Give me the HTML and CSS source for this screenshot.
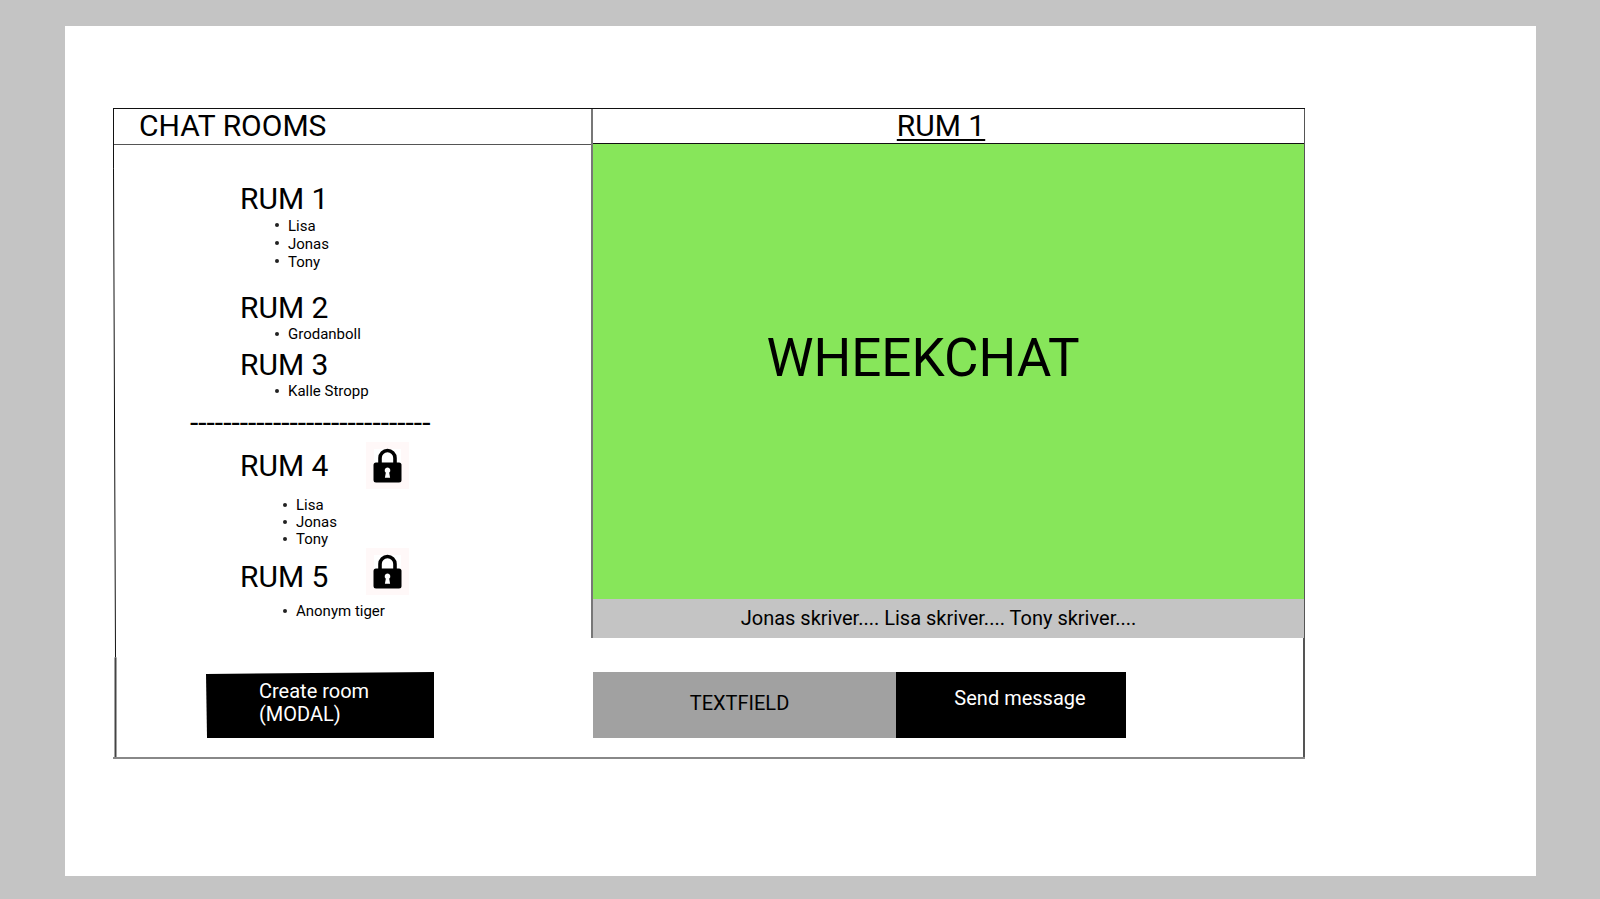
FILE: index.html
```html
<!DOCTYPE html>
<html lang="sv">
<head>
<meta charset="utf-8">
<title>Wheekchat</title>
<link rel="stylesheet" href="styles.css">
</head>
<body>
<svg class="sprite" aria-hidden="true">
  <symbol id="lock" viewBox="0 0 43 47">
    <rect width="43" height="47" fill="#fff8f8"/>
    <rect x="8" y="7" width="27" height="18" fill="#fff"/>
    <path d="M14 23V16a7.500 7.500 0 0 1 15 0v7" fill="none" stroke="#000" stroke-width="3.600"/>
    <rect x="7.500" y="20.500" width="28" height="20" rx="2.500" fill="#000"/>
    <path d="M21.500 25.500a2.900 2.900 0 0 1 1.700 5.200l.9 5.100h-5.200l.9-5.100a2.900 2.900 0 0 1 1.700-5.200z" fill="#fff"/>
  </symbol>
</svg>
<main class="page">
  <div class="frame">
    <aside class="sidebar">
      <h1 class="title">CHAT ROOMS</h1>
      <div class="rooms">
        <section class="room room-spaced">
          <h2 class="room-name">RUM 1</h2>
          <ul class="members"><li>Lisa</li><li>Jonas</li><li>Tony</li></ul>
        </section>
        <section class="room">
          <h2 class="room-name">RUM 2</h2>
          <ul class="members"><li>Grodanboll</li></ul>
        </section>
        <section class="room">
          <h2 class="room-name">RUM 3</h2>
          <ul class="members"><li>Kalle Stropp</li></ul>
        </section>
        <div class="separator" aria-hidden="true">-----------------------------</div>
        <section class="room-locked">
          <div class="room-head"><h2 class="room-name">RUM 4</h2><svg class="lock" role="img" aria-label="Locked"><use href="#lock"/></svg></div>
          <ul class="members"><li>Lisa</li><li>Jonas</li><li>Tony</li></ul>
        </section>
        <section class="room-locked">
          <div class="room-head room-head-low"><h2 class="room-name">RUM 5</h2><svg class="lock" role="img" aria-label="Locked"><use href="#lock"/></svg></div>
          <ul class="members"><li>Anonym tiger</li></ul>
        </section>
      </div>
      <button class="button create" type="button">Create room<br>(MODAL)</button>
      <svg class="edge" viewBox="0 0 4 650" preserveAspectRatio="none" aria-hidden="true">
        <path d="M.5 0V60L2.500 550" fill="none" stroke="#111" stroke-width="1"/>
        <path d="M2.500 550V650" fill="none" stroke="#444" stroke-width="2"/>
      </svg>
    </aside>
    <section class="chat">
      <div class="conversation">
        <h2 class="room-title">RUM 1</h2>
        <div class="messages"><p class="brand">WHEEKCHAT</p></div>
        <p class="typing">Jonas skriver.... Lisa skriver.... Tony skriver....</p>
      </div>
      <form class="composer">
        <input class="message-input" type="text" aria-label="Message" placeholder="TEXTFIELD">
        <button class="button send" type="button">Send message</button>
      </form>
    </section>
  </div>
</main>
</body>
</html>
```
FILE: styles.css
```css
* {
  box-sizing: border-box;
}

body {
  margin: 0;
  min-height: 100vh;
  padding: 26px 64px 23px 65px;
  display: flex;
  background: #c4c4c4;
  color: #000;
  font-family: Roboto, "Liberation Sans", sans-serif;
}

h1, h2, p, ul {
  margin: 0;
  padding: 0;
  font-weight: 400;
}

.sprite {
  position: absolute;
  width: 0;
  height: 0;
}

.page {
  flex: 1;
  padding: 82px 231px 82px 48px;
  background: #fff;
}

.frame {
  display: grid;
  grid-template-columns: 478fr 714fr;
  border-top: 1px solid #111;
  border-bottom: 2px solid #888;
}

.sidebar {
  position: relative;
  display: flex;
  flex-direction: column;
  padding-bottom: 19px;
}

.edge {
  position: absolute;
  top: 0;
  left: 0;
  width: 4px;
  height: 100%;
}

.title, .room-title {
  height: 35px;
  font-size: 30px;
  line-height: 34px;
  border-bottom: 1px solid #111;
}

.title {
  height: 36px;
  padding-left: 26px;
  border-color: #555;
}

.rooms {
  flex: 1;
  padding: 36px 0 52px 127px;
}

.room-name {
  font-size: 30px;
  line-height: 36px;
}

.room {
  margin-bottom: 4px;
}

.room-spaced {
  margin-bottom: 19px;
}

.members {
  padding-left: 48px;
  list-style: none;
  font-size: 15px;
  line-height: 17px;
}

.room-spaced .members {
  line-height: 18px;
}

.members li {
  position: relative;
}

.members li::before {
  content: "";
  position: absolute;
  left: -13px;
  top: 6px;
  width: 4px;
  height: 4px;
  border-radius: 50%;
  background: #222;
}

.separator {
  margin: 5px 0 1px -50px;
  font-size: 30px;
  line-height: 36px;
}

.room-head {
  display: flex;
  align-items: center;
  gap: 38px;
}

.room-head-low {
  align-items: flex-end;
}

.room-locked .members {
  padding-left: 56px;
  margin-top: 8px;
}

.lock {
  width: 43px;
  height: 47px;
}

.button {
  height: 66px;
  border: 0;
  background: #000;
  color: #fff;
  font: inherit;
  font-size: 20px;
  line-height: 23px;
}

.create {
  width: 228px;
  margin-left: 93px;
  padding: 0 0 4px 53px;
  text-align: left;
  clip-path: polygon(0 2px, 100% 0, 100% 100%, 1px 100%);
}

.chat {
  display: flex;
  flex-direction: column;
}

.conversation {
  flex: 1;
  display: flex;
  flex-direction: column;
  border-left: 2px solid #777;
  border-right: 1px solid #555;
}

.room-title {
  padding-right: 15px;
  text-align: center;
  text-decoration: underline;
  text-decoration-thickness: 2px;
  text-underline-offset: 3px;
}

.messages {
  flex: 1;
  display: flex;
  align-items: center;
  justify-content: center;
  padding: 0 51px 27px 0;
  background: #87e65a;
}

.brand {
  font-size: 53px;
  line-height: 62px;
}

.typing {
  padding-right: 20px;
  background: #c4c4c4;
  font-size: 20px;
  line-height: 39px;
  text-align: center;
}

.composer {
  display: grid;
  grid-template-columns: 303fr 230fr;
  padding: 34px 177px 19px 2px;
  border-right: 2px solid #555;
}

.message-input {
  min-width: 0;
  height: 66px;
  padding: 0 10px 4px 0;
  border: 0;
  border-radius: 0;
  background: #a1a1a1;
  font: inherit;
  font-size: 20px;
  text-align: center;
}

.message-input::placeholder {
  color: #000;
  opacity: 1;
}

.send {
  padding: 0 0 14px 18px;
}
```
